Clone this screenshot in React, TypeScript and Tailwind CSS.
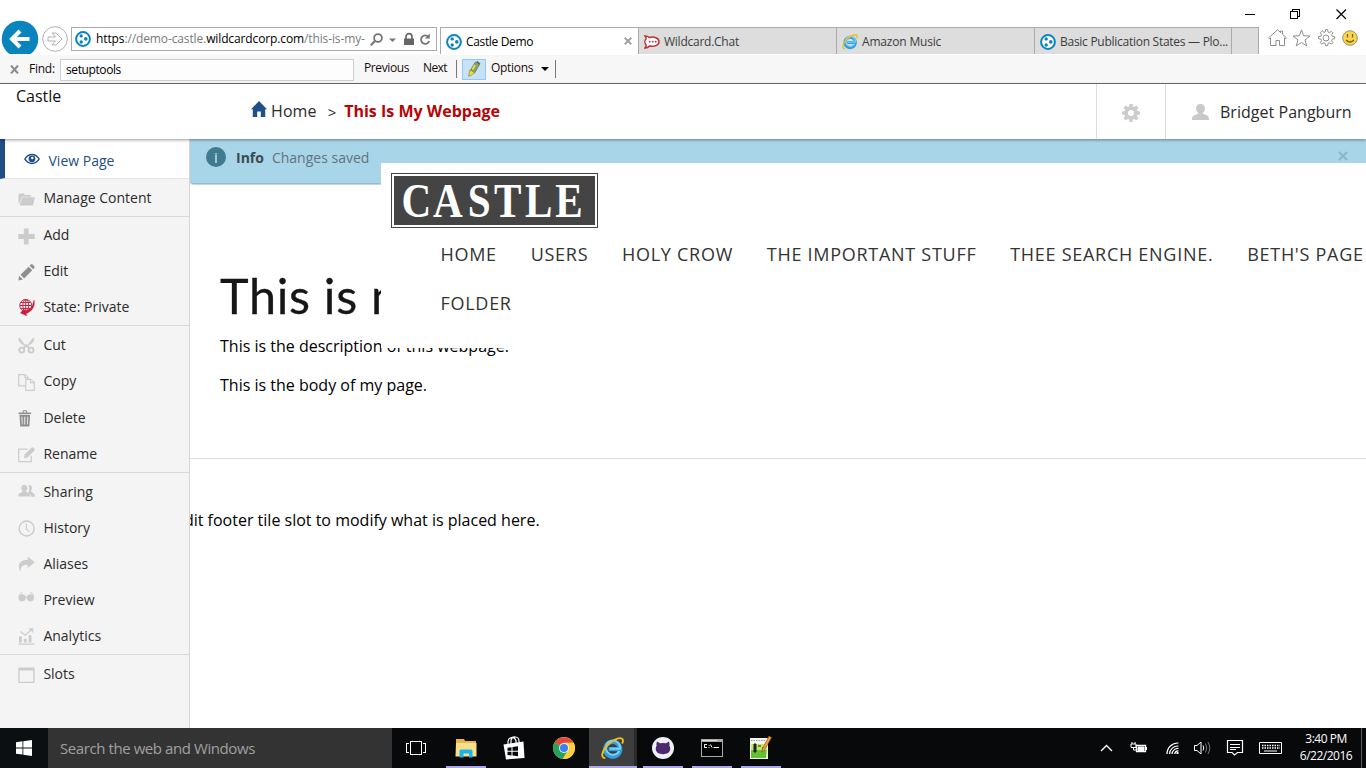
import React from 'react';

type P = { className?: string };

const PloneLogo = ({ className = '' }: P) => (
  <svg className={`h-4 w-4 shrink-0 ${className}`} viewBox="0 0 16 16">
    <circle cx="8" cy="8" r="6.9" fill="#fff" stroke="#0a84bf" strokeWidth="2" />
    <circle cx="6.2" cy="4.9" r="1.7" fill="#0a84bf" />
    <circle cx="10.8" cy="7.9" r="1.8" fill="#0a84bf" />
    <circle cx="6.2" cy="11" r="1.7" fill="#0a84bf" />
  </svg>
);

const IELogo = ({ className = '' }: P) => (
  <svg className={`shrink-0 ${className}`} viewBox="0 0 24 24">
    <path d="M19.8 14.6A7.8 7.8 0 1 1 20 12.7H8" fill="none" stroke="#2e9fe0" strokeWidth="4.4" />
    <path d="M19 14.6A7.4 7.4 0 1 1 19.8 12.2H9" fill="none" stroke="#7cd0f7" strokeWidth="2" />
    <path d="M4.5 21.8C-.6 22.4.6 14.6 7 8.2 13 2 21 -.6 22.6 2.6c.5 1.1.3 2.7-.5 4.3" fill="none" stroke="#f3bd1c" strokeWidth="2" />
  </svg>
);

const UserShape = () => <path d="M10 1c2.900 0 4.700 2 4.700 4.700 0 2-1 3.700-2.300 4.600v.8l5 2.300c1 .6 1.600 2.200 1.600 4.600H1c0-2.400.6-4 1.600-4.600l5-2.300v-.8C6.300 9.400 5.300 7.700 5.300 5.700 5.300 3 7.100 1 10 1z" />;

const icons: Record<string, React.ReactNode> = {
  folder: <><path d="M.5 12.500V4l1-1.500h4.500l1 1.500h6.500v2H4L1.800 12z" /><path d="M4.500 6.500H17.300L15.500 15H1.500z" /></>,
  plus: <path d="M6 .5h5v5.700h6.200v5H11V17H6v-5.800H.3v-5H6z" />,
  pencil: <g fill="#8f8f8f"><path d="M1.200 12.200 5 16l-4.500 1z" /><path d="M2.600 11 11 2.800l3.700 3.700L6.300 15z" /><path d="m12 1.800 1.200-1.200c.6-.5 1.300-.4 1.800 0l1.800 1.800c.4.500.4 1.200 0 1.700L15.600 5.300z" /></g>,
  globe: <g fill="none" stroke="#c4213f" strokeWidth="1"><circle cx="8" cy="6.700" r="6.200" /><ellipse cx="8" cy="6.700" rx="3" ry="6.200" /><path d="M8 .6v12M2 6.700h12M3 3.600h10M3 9.700h10" /><path d="M16.600 1c.3 1.500.4 3 .2 4.500-.8 5-4.300 8.300-8.500 9.500l.5 2.300-6.300-3 3.800-4.500.6 2.200c4.500-.7 7.900-3.200 8.600-8z" fill="#c4213f" strokeWidth=".4" /></g>,
  cut: <g fill="none" stroke="#ccc" strokeWidth="1.900"><circle cx="3.800" cy="13.500" r="2.600" /><circle cx="13.400" cy="13.500" r="2.600" /><path d="m5.500 11.600 3.100-3 3.100 3" /><path d="M7.600 9 1.300.8C.4 2.600 1.300 5 3 6.500zM9.600 9l6.300-8.200c.9 1.800 0 4.200-1.700 5.700z" fill="#ccc" strokeWidth=".8" /></g>,
  copy: <g fill="#f4f4f4" stroke="#ccc" strokeWidth="1.200"><path d="M.7.700h6.600l3 3v8.600H.700z" /><path d="M7.300.7v3h3" /><path d="M8 5.500h5.300l3.500 3v8.300H8z" /><path d="M13 5.500v3.300h3.500" /></g>,
  trash: <g fill="#8f8f8f"><path d="M.5 2.500h4.300V1q0-.7.8-.7h3q.8 0 .8.700v1.500h4.100V4H.5zM5.800 1.200v1.300h2.600V1.200z" /><path fillRule="evenodd" d="M1.500 5h11l-.8 12H2.300zm2 2 .5 8h.8l-.4-8zm3 0v8h1V7zm3.200 0-.4 8h.8l.5-8z" /></g>,
  rename: <g><path d="M10 2.300H.7V15h13V9" fill="none" stroke="#ccc" strokeWidth="1.300" /><path d="m7 7.500 7-7 1.300-.3 2 2-.3 1.300-7 7L6 11.800z" /></g>,
  share: <><path d="M11 1c2.400-.2 3.600 1.300 3.300 3.600-.1 1.300-.7 2-1.100 2.500l4 3.700V13h-3.500c-.4-2.200-2-3.300-3.200-4 1-1.200 1.600-5.500.5-8z" /><path d="M6.500.8c2 0 3.200 1.300 3.200 3.300 0 1.400-.6 2.600-1.500 3.200v.6l3.300 1.700c.8.500 1.100 1.500 1.100 3.200H.5c0-1.700.3-2.700 1.100-3.200l3.200-1.700v-.6C3.900 6.700 3.300 5.500 3.300 4.100 3.300 2.100 4.500.8 6.500.8z" /></>,
  history: <g fill="none" stroke="#ccc"><circle cx="8.900" cy="8.700" r="7.700" strokeWidth="1.500" /><path d="M8.600 3.500v5.700l3 2.800" strokeWidth="1.200" /></g>,
  alias: <path d="M10 .5 17.300 6.500 10 12.400V9.100C5.200 8.900 2.300 11 2.700 16.500-.9 10 .5 4.300 10 3.900z" />,
  preview: <><circle cx="4.200" cy="6" r="3.700" /><circle cx="12.800" cy="6" r="3.700" /><path d="M7 4.800h3v1.400H7z" /><path d="M.8 4.500 2.500 1.200l2-.7M16.200 4.500 14.500 1.200l-2-.7" fill="none" stroke="#ccc" strokeWidth=".9" /></>,
  chart: <><path d="M.3 16h16.500v1.200H.3zM1 8.800h2.900V15H1zM6 11h2.900v4H6zM11 7.500h2.900V15H11z" /><path d="m2.500 3.500 5 4L13 2.300" fill="none" stroke="#ccc" strokeWidth="1.300" /><path d="M10.700.3h5v5z" /></>,
  slot: <path fillRule="evenodd" d="M1.200.5h15c.4 0 .9.300.9.700v14.600c0 .4-.5.700-.9.700h-15c-.4 0-.9-.3-.9-.7V1.200C.3.800.8.500 1.200.500zM1.700 3.700v11.500h14V3.700z" />,
};

const groups: { h: string; items: [string, string][] }[] = [
  { h: 'h-[38px]', items: [['folder', 'Manage Content']] },
  { h: 'h-[109px] pb-px', items: [['plus', 'Add'], ['pencil', 'Edit'], ['globe', 'State: Private']] },
  { h: 'h-[147px]', items: [['cut', 'Cut'], ['copy', 'Copy'], ['trash', 'Delete'], ['rename', 'Rename']] },
  { h: 'h-[182px] pb-px', items: [['share', 'Sharing'], ['history', 'History'], ['alias', 'Aliases'], ['preview', 'Preview'], ['chart', 'Analytics']] },
];

const Item = ({ icon, label }: { icon: string; label: string }) => (
  <div className="flex flex-1 items-center pl-[18px] text-[14px] text-[#2b2b2b]">
    <svg className="mt-[3px] mr-[8.400px] h-[17px] w-[17px] shrink-0" viewBox="0 0 17.500 17.500" fill="#ccc">{icons[icon]}</svg>
    <span>{label}</span>
  </div>
);

const Tab = ({ icon, label, w, spacing }: { icon: React.ReactNode; label: string; w: string; spacing: string }) => (
  <div className={`flex h-[27px] items-center gap-[3px] overflow-hidden border-t border-l border-[#ababab] bg-[#dddddd] pt-px pl-[5px] text-[12px] whitespace-nowrap text-[#3c3c3c] ${w}`}>
    {icon}
    <span className={spacing}>{label}</span>
  </div>
);

const BrowserChrome = () => (
  <div className="shrink-0 bg-white">
    <div className="flex h-5 items-end justify-end pr-[17px]">
      <svg className="h-[12px] w-[104px]" viewBox="0 0 104 12" fill="none" stroke="#000" shapeRendering="crispEdges">
        <path d="M0 6.500h10" />
        <path d="M45.500 3.500h7v7h-7zM47.500 3v-1.500h7v7H53" />
        <path d="m91.500 1.500 9.500 9.500m0-9.500-9.500 9.500" shapeRendering="auto" strokeWidth="1.200" />
      </svg>
    </div>
    <div className="flex h-[35px] items-end overflow-hidden pb-px">
      <svg className="h-[34px] w-[71px] shrink-0" viewBox="0 0 71 34">
        <circle cx="20" cy="19" r="18.300" fill="#0a84bf" />
        <path d="M29.500 19H12m8-8-8 8 8 8" fill="none" stroke="#fff" strokeWidth="4" />
        <circle cx="55" cy="19" r="12.300" fill="#fff" stroke="#b0b0b0" />
        <path d="M48 17h7.500l-3.500-4h4l6 6-6 6h-4l3.500-4H48z" fill="none" stroke="#b0b0b0" />
      </svg>
      <div className="mb-[3px] flex h-6 w-[366px] items-center border border-[#ababab] pl-[3px] text-[12px] text-[#7a7a7a]">
        <PloneLogo />
        <span className="ml-[5px] w-[274px] text-[12px] tracking-[-0.120px] whitespace-nowrap">
          <span className="text-black">https</span>://demo-castle.<span className="text-black">wildcardcorp.com</span>/this-is-my-
        </span>
        <svg className="mt-px h-4 w-[64px]" viewBox="0 0 64 16">
          <circle cx="8" cy="6" r="3.900" fill="none" stroke="#757575" strokeWidth="1.800" />
          <path d="M5.200 8.800.8 13.200" stroke="#757575" strokeWidth="2.200" />
          <path d="M19 6.500h7L22.500 10z" fill="#757575" />
          <path d="M34 6.500h10V13H34z" fill="#666" />
          <path d="M36 7V4.600a3 3 0 0 1 6 0V7" fill="none" stroke="#666" strokeWidth="1.700" />
          <path d="M58.500 5A4.200 4.200 0 1 0 59.200 9" fill="none" stroke="#757575" strokeWidth="1.800" />
          <path d="M59.800 1.500v5h-5z" fill="#757575" />
        </svg>
      </div>
      <div className="ml-[3px] flex h-[27px] w-[198px] items-center border-t border-l border-[#ababab] bg-white pt-px pl-[5px] text-[12px] text-black">
        <PloneLogo />
        <span className="ml-1 tracking-[-0.350px]">Castle Demo</span>
        <svg className="mr-[6px] mb-px ml-auto h-2 w-2" viewBox="0 0 8 8"><path d="m.7.700 6.600 6.600m0-6.600L.700 7.300" stroke="#a3a3a3" strokeWidth="2" /></svg>
      </div>
      <Tab w="w-[198px]" spacing="tracking-[-0.250px] pl-px" label="Wildcard.Chat" icon={
        <svg className="h-4 w-4 shrink-0" viewBox="0 0 16 16"><path d="M1 2c2 0 3.500.7 4.300 1.500C10 2.300 15 4 15 7.700S10 13 5.500 12C4.500 13.300 3 14 1 14c1.200-1.500 1.300-2.500 1-3.300C.5 9 .5 6.500 2 5c.3-1-.1-2-1-3z" fill="#fff" stroke="#c52b33" strokeWidth="1.500" /><g fill="#c52b33"><circle cx="5.700" cy="7.700" r=".9" /><circle cx="8.700" cy="7.700" r=".9" /><circle cx="11.700" cy="7.700" r=".9" /></g></svg>} />
      <Tab w="w-[198px]" spacing="tracking-[-0.180px] pl-px" label="Amazon Music" icon={<IELogo className="h-4 w-4" />} />
      <Tab w="w-[197px]" spacing="tracking-[-0.270px] pl-px" label="Basic Publication States — Plo..." icon={<PloneLogo />} />
      <div className="h-[27px] w-[28px] border border-b-0 border-[#ababab] bg-[#dddddd]" />
      <svg className="mb-[6px] ml-[8px] h-5 w-[96px] shrink-0" viewBox="0 0 96 20" fill="none" stroke="#8f8f8f">
        <path d="M3.500 17.500V10l-1 .8-.9-1L10.500 1.800l3 2.700V3h2v3.300l4 3.500-.9 1-1.100-.9v7.600h-5v-5h-3.500v5z" />
        <path d="m34.500 1.800 2.200 6 6.300.2-5 3.900 1.800 6.100-5.300-3.500-5.300 3.500 1.800-6.100-5-3.900 6.300-.2z" />
        <g transform="translate(-2.500 0)"><path d="m58 2.500 1.300 2 1.500-.5.300-2.400h2l.4 2.400 1.400.6 2-1.300 1.500 1.500-1.300 2 .6 1.400 2.400.5v2l-2.400.5-.6 1.400 1.300 2-1.500 1.500-2-1.300-1.400.6-.4 2.400h-2l-.4-2.400-1.400-.6-2 1.300-1.500-1.500 1.300-2-.6-1.400-2.400-.5v-2l2.400-.5.6-1.400-1.300-2L57 3.300z" />
        <circle cx="61.500" cy="10" r="3" /></g>
        <circle cx="83" cy="10" r="7.300" fill="#fbd64b" stroke="#9b9372" />
        <path d="M80.500 6v3.500M85.500 6v3.500" stroke="#7a6520" strokeWidth="1.300" />
        <path d="M79 12q4 4 8 0" stroke="#7a6520" strokeWidth="1.200" />
      </svg>
    </div>
    <div className="flex h-[29px] items-center border-b border-[#6f6f6f] bg-[#f7f7f7] text-[12px] text-[#1a0a0a]">
      <svg className="ml-[10px] h-[9px] w-[9px]" viewBox="0 0 9 9"><path d="m1 .5 7 8M8 .5l-7 8" stroke="#8c8c8c" strokeWidth="2" /></svg>
      <span className="ml-[10px] w-[31px] tracking-[-0.250px]">Find:</span>
      <div className="mt-[1px] flex h-[22px] w-[294px] items-center border border-[#cfcfcf] bg-[#fdfdfd] pl-[5px] tracking-[-0.400px] text-black">setuptools</div>
      <span className="-mt-[3px] ml-[10px] w-[59px] tracking-[-0.400px]">Previous</span>
      <span className="-mt-[3px] w-[33px] tracking-[-0.600px]">Next</span>
      <div className="h-[18px] w-px bg-[#777]" />
      <div className="mr-0 ml-[5px] flex h-[21px] w-6 items-center justify-center border border-[#90c8f6] bg-[#c7e1f7]">
        <svg className="h-[18px] w-[14px]" viewBox="0 0 14 18"><path d="M8.500 2 13 3.500 7.500 13 3 11z" fill="#8fa36b" stroke="#6b7146" strokeWidth=".8" /><path d="m3 10 4.500 2.500L4 15.500l-2.500.8z" fill="#f1e321" stroke="#8d8a2b" strokeWidth=".7" /><path d="M8 5 5.500 9.500" stroke="#e8e73f" strokeWidth="1.600" /><path d="M10 1.500 12.500 4" stroke="#566" strokeWidth="1.500" /></svg>
      </div>
      <span className="-mt-[3px] ml-[5px] w-[50px] tracking-[-0.300px]">Options</span>
      <svg className="-mt-px h-1 w-2" viewBox="0 0 8 4"><path d="M0 0h8L4 4z" /></svg>
      <div className="ml-[6px] h-[18px] w-px bg-[#777]" />
    </div>
  </div>
);

const SiteHeader = () => (
  <header className="relative z-20 flex h-[55px] shrink-0 bg-white text-[16px] shadow-[0_1px_3px_rgba(0,0,0,0.400)]">
    <div className="w-[251px] pl-4 leading-[25px] text-[#111]">Castle</div>
    <div className="flex flex-1 items-center pb-[2px] text-[#2b2b2b]">
      <svg className="mr-1 -mt-[3px] h-4 w-4" viewBox="0 0 16 16" fill="#1f4f86"><path d="M8 0 16 8.300h-1.800V16H9.800v-5.500H6.200V16H1.800V8.300H0z" /></svg>
      <span className="tracking-[0.100px]">Home</span>
      <span className="mt-[3px] mr-[8px] ml-[11px] text-[15px]">&gt;</span>
      <span className="font-bold text-[#b50505]">This Is My Webpage</span>
    </div>
    <div className="flex w-[69px] items-center justify-center border-l border-[#dcdcdc]">
      <svg className="mt-[3px] h-[18px] w-[18px]" viewBox="0 0 18 18"><path fill="#ccc" fillRule="evenodd" d="M7.500 0h3l.4 2.600 1.300.5 2.100-1.500 2.100 2.100-1.500 2.100.5 1.300 2.600.4v3l-2.600.4-.5 1.300 1.500 2.100-2.100 2.100-2.100-1.500-1.300.5-.4 2.600h-3l-.4-2.600-1.300-.5-2.100 1.500-2.100-2.100 1.500-2.100-.5-1.300L0 10.500v-3l2.600-.4.5-1.300-1.500-2.100 2.100-2.100 2.100 1.500 1.300-.5zM9 6a3 3 0 1 0 0 6 3 3 0 0 0 0-6z" /></svg>
    </div>
    <div className="flex w-[201px] items-center border-l border-[#dcdcdc] pl-[25px] text-[#2b2b2b]">
      <svg className="mt-[2px] mr-[10px] h-[19px] w-[19px]" viewBox="0 0 20 20" fill="#c9c9c9"><UserShape /></svg>
      <span className="tracking-[0.030px] whitespace-nowrap">Bridget Pangburn</span>
    </div>
  </header>
);

const navItems = ['HOME', 'USERS', 'HOLY CROW', 'THE IMPORTANT STUFF', 'THEE SEARCH ENGINE.', "BETH'S PAGE", 'FOLDER'];

const Running = () => <div className="absolute bottom-0 left-[5px] h-[2px] w-10 bg-[#a9a6ee]" />;
const Slot = ({ children, on }: { children: React.ReactNode; on?: boolean }) => (
  <div className="relative flex w-[49px] items-center justify-center">{children}{on && <Running />}</div>
);

const Taskbar = () => (
  <footer className="flex h-10 shrink-0 bg-[#08090b] text-white">
    <div className="flex w-12 items-center justify-center bg-[#0c0f12]">
      <svg className="h-4 w-4" viewBox="0 0 16 16" fill="#fff"><path d="M0 2.200 6.500 1.300v6.200H0zM7.300 1.200 16 0v7.500H7.300zM0 8.400h6.500v6.200L0 13.700zM7.300 8.400H16V16l-8.700-1.200z" /></svg>
    </div>
    <div className="flex w-[344px] items-center bg-[#333] pl-3 text-[15px] tracking-[-0.420px] text-[#a0a0a0]">Search the web and Windows</div>
    <Slot>
      <svg className="mr-px h-[15px] w-5" viewBox="0 0 20 15" fill="none" stroke="#fff" shapeRendering="crispEdges"><path d="M4.500.5h11v13h-11zM3 2.500H.5v9H3M17 2.500h2.500v9H17" /></svg>
    </Slot>
    <Slot on>
      <svg className="h-5 w-[22px]" viewBox="0 0 22 20"><path d="M1 1h8l1 2h11v15H1z" fill="#e8b64a" /><path d="M1 5h20.500v13.500H.5z" fill="#fbdf87" /><path d="M4.500 19.500V13q0-1.500 1.500-1.500h10q1.500 0 1.500 1.500v6.500H14V15.500H8.500v4z" fill="#19b4ee" /></svg>
    </Slot>
    <Slot>
      <svg className="mr-px h-6 w-[22px]" viewBox="0 0 22 24"><path d="m.5 8.500 20-3 1 16.500L3 23.500z" fill="#fff" /><path d="M5 8V5.500Q5.500 2 8.500 1.500T13 4.500V7M8 8V4Q9 .5 12.500 1t3.500 4v1.500" fill="none" stroke="#fff" strokeWidth="1.200" /><path d="m4.500 11.800 4-.6v3.600h-4zM9.500 11l5.500-.8v4.600H9.500zM4.500 15.800h4v3.600l-4-.5zM9.500 15.800H15v4.500l-5.500-.7z" fill="#08090b" /></svg>
    </Slot>
    <Slot>
      <svg className="h-[22px] w-[22px]" viewBox="0 0 22 22"><circle cx="11" cy="11" r="11" fill="#fdd03b" /><path d="M11 11 1.500 5.500A11 11 0 0 1 20.500 5.700L11 6z" fill="#e04a3f" /><path d="M1.500 5.500A11 11 0 0 0 9.800 22l5-8.500L11 11z" fill="#23a35b" /><path d="M20.600 5.800H11v5l4 2.500L9.800 22A11 11 0 0 0 20.600 5.800z" fill="#fdd03b" /><circle cx="11" cy="11" r="5" fill="#f4f4f4" /><circle cx="11" cy="11" r="4" fill="#3f80ef" /></svg>
    </Slot>
    <div className="relative mr-px ml-px flex w-12 items-center justify-center border-r-[3px] border-[#2a2a2a] bg-[#3e3e3e] pl-[2px]">
      <IELogo className="h-[23px] w-[23px]" />
      <div className="absolute -right-[3px] bottom-0 left-0 h-[2px] bg-[#a9a6ee]" />
    </div>
    <Slot on>
      <svg className="h-[22px] w-[22px]" viewBox="0 0 22 22"><circle cx="11" cy="11" r="11" fill="#efeff6" /><path d="M5 4.500 8 6.300q3-.5 6 0l3-1.800q.8 2 .3 4c1.700 2.500 1 6-1.300 7.500-2.500 1.500-7.500 1.500-10 0C3.700 14.500 3 11 4.700 8.500Q4.200 6.500 5 4.500z" fill="#4b2a70" /></svg>
    </Slot>
    <Slot on>
      <svg className="h-5 w-[22px]" viewBox="0 0 22 20"><path d="M0 1h22v18H0z" fill="#a9a9a9" /><path d="M1 4h20v14H1z" fill="#000" /><path d="M1 2h15v1H1z" fill="#ddd" /><path d="M6 6.500H3.500v3H6M8 7v.8M8 9v.8M9.500 6.500l1.500 3M12.500 9.500H18" stroke="#fff" fill="none" /></svg>
    </Slot>
    <Slot on>
      <svg className="h-6 w-[22px]" viewBox="0 0 22 24"><path d="M0 2h18v21H0z" fill="#f4f6ea" /><path d="M1 12h16l-1 10H1z" fill="#63bf33" /><path d="M1 8h16v6H1z" fill="#c3e86a" /><path d="M1 4.500h14" stroke="#99a" strokeDasharray="1.500 1" /><path d="M4 8v8h2V8zm4 2h3M12 12h3" fill="#222" stroke="#222" /><path d="m19 0 2.500 1.500L14.500 14 12 16l.3-3z" fill="#e8a33a" stroke="#8c4f20" strokeWidth=".6" /></svg>
    </Slot>
    <div className="ml-auto flex items-center">
      <svg className="h-5 w-[182px]" viewBox="0 0 182 20" fill="none" stroke="#fff">
        <path d="m1 13 5.500-5.500L12 13" strokeWidth="1.400" />
        <path d="M36.500 7.500h9v6h-9z" strokeWidth="1.300" /><path d="M38 9h6v3.500h-6z" fill="#fff" /><path d="M46.500 9v3" /><path d="M31 6v3.500h5V6zM32 6V4m3 2V4m-1.500 5.500v2.500h3" />
        <g strokeWidth="1.200"><path d="M67 16A11 11 0 0 1 78.500 5" /><path d="M69.500 16A8.500 8.500 0 0 1 78.500 8" /><path d="M72 16A6 6 0 0 1 78.500 10.500" /><path d="M74.700 16a3.500 3.500 0 0 1 3.800-3" /></g><path d="M76.500 14h2v2h-2z" fill="#fff" stroke="none" />
        <path d="M94.500 7.500h2.500l4-3.500v12l-4-3.500h-2.500z" /><path d="M103 7.500q1.500 2.500 0 5" /><path d="M105.500 5.500q2.500 4.500 0 9M108 4q3.500 6 0 12" stroke="#777" />
        <path d="M127.500 2.500h15v12h-5l-3 2.500-2.500-2.500h-4.500z" strokeWidth="1.200" /><path d="M130 6.500h10M130 9.500h10M130 11.500h6" />
        <path d="M159.500 4.500h22v11h-22z" /><path d="M162 7.500h18M162 10h18" strokeDasharray="1.500 1" strokeWidth="1.400" /><path d="M164 13h13" />
      </svg>
      <div className="ml-[17px] w-[54px] pb-[2px] text-center text-[12px] leading-[17px] tracking-[-0.500px] whitespace-nowrap">
        <div>3:40 PM</div>
        <div>6/22/2016</div>
      </div>
      <div className="mr-1 ml-[8px] h-10 w-px bg-[#5d5d5d]" />
    </div>
  </footer>
);

export default function App() {
  return (
    <div className="flex h-[768px] w-[1366px] flex-col overflow-hidden bg-white font-['Open_Sans',sans-serif]">
      <BrowserChrome />
      <SiteHeader />
      <div className="flex min-h-0 flex-1">
        <aside className="flex w-[190px] shrink-0 flex-col border-r border-[#d6d6d6] bg-[#f4f4f4]">
          <div className="flex h-10 shrink-0 items-center border-b border-l-[5px] border-b-[#e6e6e6] border-l-[#1f4f86] bg-white pt-1 pl-[19px] text-[14px] text-[#1f4f86]">
            <svg className="-mt-1 mr-[8.500px] h-3 w-4" viewBox="0 0 16 12"><path fillRule="evenodd" d="M0 6C2 2.600 4.800.8 8 .8S14 2.600 16 6c-2 3.400-4.800 5.200-8 5.200S2 9.400 0 6zm1.700 0c1.500 2.400 3.700 3.800 6.300 3.800S12.800 8.400 14.300 6C12.800 3.600 10.600 2.200 8 2.200S3.200 3.600 1.700 6z" fill="#1f4f86" /><circle cx="8" cy="5.800" r="3.400" fill="#1f4f86" /><circle cx="8.300" cy="5" r="1.200" fill="#fff" /></svg>
            View Page
          </div>
          {groups.map((g) => (
            <div key={g.h} className={`flex shrink-0 flex-col border-b border-[#d9d9d9] ${g.h}`}>
              {g.items.map(([icon, label]) => <Item key={label} icon={icon} label={label} />)}
            </div>
          ))}
          <div className="flex h-[37px] shrink-0"><Item icon="slot" label="Slots" /></div>
        </aside>
        <main className="relative min-w-0 flex-1 overflow-hidden text-[16px] leading-6 text-black">
          <div className="flex h-[45px] rounded-b-[4px] border-b border-[#8fbdd2] bg-[#a9d5e8] pt-2 pl-4 text-[14px] leading-[21px] shadow-[0_1px_1px_rgba(0,0,0,0.200)]">
            <div className="flex h-5 w-5 items-center justify-center rounded-full bg-[#3f7a8e] text-[15px] text-[#d5edf6]">i</div>
            <span className="ml-[10px] font-bold text-[#3b4a50]">Info</span>
            <span className="ml-[8px] text-[#60747d]">Changes saved</span>
            <svg className="mt-1 mr-[18px] ml-auto h-[10px] w-[10px]" viewBox="0 0 10 10"><path d="m1 1 8 8m0-8L1 9" stroke="#8fb4c4" strokeWidth="2.200" /></svg>
          </div>
          <div className="h-[275px] border-b border-[#ddd] pt-[82px] pl-[30px]">
            <h1 className="font-['Lato',sans-serif] text-[48.500px] leading-[58px] tracking-[0.700px] whitespace-nowrap text-[#161616] [-webkit-text-stroke:0.300px_#161616]">This is my webpage</h1>
            <p className="mt-[10px]">This is the description of this webpage.</p>
            <p className="mt-[15px]">This is the body of my page.</p>
          </div>
          <p className="mt-[49px] -ml-[15px] whitespace-nowrap">Edit footer tile slot to modify what is placed here.</p>
          <div className="absolute top-6 right-0 left-[191px] h-[185px] bg-white pt-[10px] pl-[10px]">
            <div className="h-[55px] w-[207px] border border-[#444] bg-white p-[2px]">
              <svg className="h-full w-full bg-[#444]" viewBox="0 0 201 49">
                <text transform="translate(7.500 40.500) scale(.84 1)" x="0 37.500 79 110 147 183" y="0" fontFamily="'Liberation Serif', serif" fontWeight="700" fontSize="49" fill="#fff">CASTLE</text>
              </svg>
            </div>
            <nav className="flex flex-wrap gap-x-[33.800px] pt-[2px] pl-[49.500px] text-[18px] leading-[49px] tracking-[0.720px] text-[#333]">
              {navItems.map((n) => <span key={n} className="whitespace-nowrap">{n}</span>)}
            </nav>
          </div>
        </main>
      </div>
      <Taskbar />
    </div>
  );
}
